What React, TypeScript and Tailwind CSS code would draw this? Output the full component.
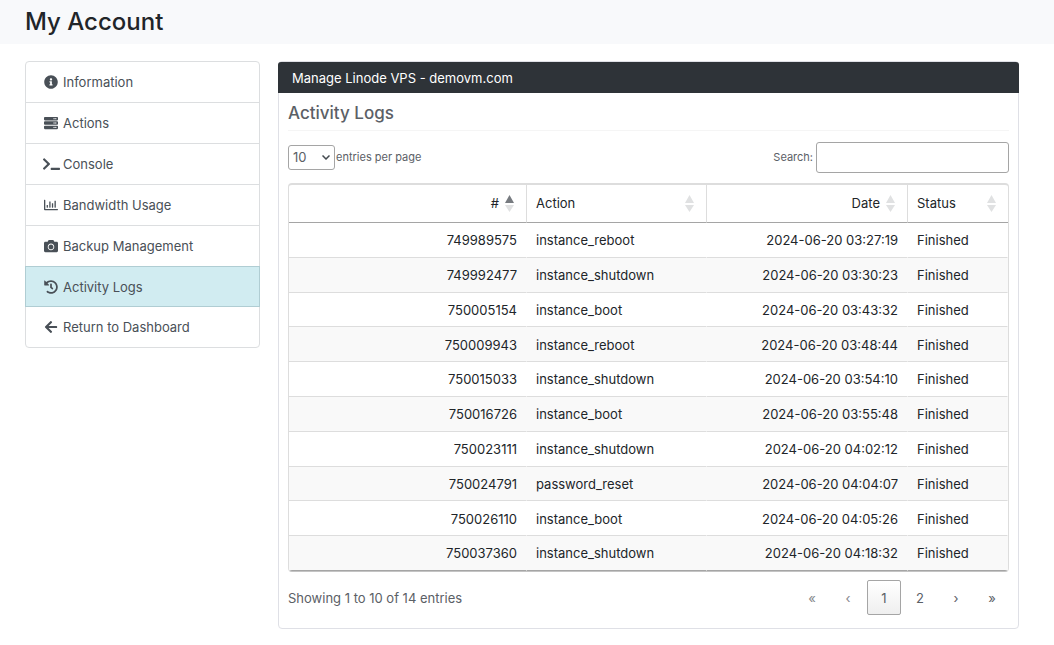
import { useState } from "react";
import type { IconType } from "react-icons";
import {
  FaArrowLeft,
  FaCamera,
  FaHistory,
  FaInfoCircle,
  FaRegChartBar,
  FaServer,
  FaTerminal,
} from "react-icons/fa";
import { clsx } from "clsx";

interface MenuItem {
  label: string;
  icon: IconType;
  wide?: boolean;
}

const MENU: MenuItem[] = [
  { label: "Information", icon: FaInfoCircle },
  { label: "Actions", icon: FaServer },
  { label: "Console", icon: FaTerminal, wide: true },
  { label: "Bandwidth Usage", icon: FaRegChartBar },
  { label: "Backup Management", icon: FaCamera },
  { label: "Activity Logs", icon: FaHistory },
  { label: "Return to Dashboard", icon: FaArrowLeft },
];

const LOGS = [
  { id: 749989575, action: "instance_reboot", date: "2024-06-20 03:27:19", status: "Finished" },
  { id: 749992477, action: "instance_shutdown", date: "2024-06-20 03:30:23", status: "Finished" },
  { id: 750005154, action: "instance_boot", date: "2024-06-20 03:43:32", status: "Finished" },
  { id: 750009943, action: "instance_reboot", date: "2024-06-20 03:48:44", status: "Finished" },
  { id: 750015033, action: "instance_shutdown", date: "2024-06-20 03:54:10", status: "Finished" },
  { id: 750016726, action: "instance_boot", date: "2024-06-20 03:55:48", status: "Finished" },
  { id: 750023111, action: "instance_shutdown", date: "2024-06-20 04:02:12", status: "Finished" },
  { id: 750024791, action: "password_reset", date: "2024-06-20 04:04:07", status: "Finished" },
  { id: 750026110, action: "instance_boot", date: "2024-06-20 04:05:26", status: "Finished" },
  { id: 750037360, action: "instance_shutdown", date: "2024-06-20 04:18:32", status: "Finished" },
];

function SideMenu() {
  return (
    <nav className="w-[235px] shrink-0 rounded border border-[#dcdee0]">
      {MENU.map(({ label, icon: Icon, wide }) => {
        const active = label === "Activity Logs";
        return (
          <a
            key={label}
            href="#"
            aria-current={active ? "page" : undefined}
            className={clsx(
              "flex h-[41px] items-center gap-1 border-b px-[17px] text-[13px] text-[#495057] last:h-10 last:border-b-0",
              active
                ? "-mx-px -mt-px border-x border-t border-[#b0cdd3] bg-[#d1ecf1]"
                : "border-[#dcdee0]"
            )}
          >
            <span className="flex w-4 shrink-0 justify-center">
              <Icon className={clsx("h-3.5 shrink-0", wide ? "w-[17px]" : "w-3.5")} aria-hidden="true" />
            </span>
            <span className="pt-0.5">{label}</span>
          </a>
        );
      })}
    </nav>
  );
}

function SortIcon({ direction }: { direction?: "asc" | "desc" }) {
  return (
    <svg viewBox="0 0 9 17" className="h-[17px] w-[9px] shrink-0" aria-hidden="true">
      <path d="M4.5 0 9 8H0z" fill={direction === "asc" ? "#777b80" : "#e0e1e2"} />
      <path d="M0 10h9l-4.5 7z" fill={direction === "desc" ? "#777b80" : "#e0e1e2"} />
    </svg>
  );
}

interface HeadCellProps {
  label: string;
  className?: string;
  numeric?: boolean;
  direction?: "asc" | "desc";
}

function HeadCell({ label, className, numeric, direction }: HeadCellProps) {
  return (
    <th
      scope="col"
      aria-sort={direction === "asc" ? "ascending" : undefined}
      className={clsx("h-[38px] border-r border-b border-r-[#dddddd] border-b-[#a5a5a5] p-0 font-normal last:border-r-0", className)}
    >
      <button
        type="button"
        className={clsx("flex w-full items-center pr-3 pl-[9px]", numeric ? "justify-end gap-1.5" : "justify-between")}
      >
        {label}
        <SortIcon direction={direction} />
      </button>
    </th>
  );
}

function LogTable() {
  return (
    <div className="mt-2.5 overflow-hidden rounded border border-t-2 border-[#dddddd] border-b-[#c4c4c4]">
      <table className="h-[386px] w-full table-fixed border-separate border-spacing-0 text-[13px] text-[#212529]">
        <thead>
          <tr>
            <HeadCell label="#" numeric direction="asc" />
            <HeadCell label="Action" className="w-[180px]" />
            <HeadCell label="Date" className="w-[201px]" numeric />
            <HeadCell label="Status" className="w-[100px]" />
          </tr>
        </thead>
        <tbody className="[&_td]:border-r [&_td]:border-b [&_td]:border-r-transparent [&_td]:border-b-[#dddddd] [&_td]:px-[9px] [&_td]:pt-0.5 [&_td]:pb-0 [&_td]:whitespace-nowrap [&_tr:last-child_td]:border-b-[#a5a5a5] [&_tr:nth-child(even)]:bg-[#f9f9f9]">
          {LOGS.map((log) => (
            <tr key={log.id}>
              <td className="text-right">{log.id}</td>
              <td>{log.action}</td>
              <td className="text-right">{log.date}</td>
              <td>{log.status}</td>
            </tr>
          ))}
        </tbody>
      </table>
    </div>
  );
}

function PageLength() {
  return (
    <div className="flex items-center">
      <div className="relative">
        <select
          id="page-length"
          defaultValue="10"
          className="block h-[25px] w-[47px] appearance-none rounded-[3px] border border-[#a5a5a5] bg-white pl-1 text-[13px]"
        >
          <option>10</option>
          <option>25</option>
          <option>50</option>
        </select>
        <svg
          viewBox="0 0 8 5"
          className="pointer-events-none absolute top-2.5 right-[5px] h-[5px] w-2"
          fill="none"
          stroke="#444a50"
          strokeWidth="1.5"
          aria-hidden="true"
        >
          <path d="M.5.5 4 4 7.5.5" />
        </svg>
      </div>
      <label htmlFor="page-length" className="pl-px">
        entries per page
      </label>
    </div>
  );
}

function Pagination() {
  const [page, setPage] = useState(1);
  const buttons = [
    { text: "«", label: "First", target: 1 },
    { text: "‹", label: "Previous", target: Math.max(1, page - 1) },
    { text: "1", label: "Page 1", target: 1 },
    { text: "2", label: "Page 2", target: 2 },
    { text: "›", label: "Next", target: Math.min(2, page + 1) },
    { text: "»", label: "Last", target: 2 },
  ];

  return (
    <nav aria-label="Log pages" className="flex gap-0.5">
      {buttons.map(({ text, label, target }) => {
        const current = text === String(page);
        const muted = page === 1 && target === 1 && !current;
        return (
          <button
            key={label}
            type="button"
            aria-label={label}
            aria-current={current ? "page" : undefined}
            onClick={() => setPage(target)}
            className={clsx(
              "h-[35px] w-[34px] rounded-xs border pt-0.5 text-[13px]",
              current ? "border-[#a5a5a5] bg-linear-to-b from-white to-[#efefef]" : "border-transparent",
              muted && "text-[#85888c]"
            )}
          >
            {text}
          </button>
        );
      })}
    </nav>
  );
}

export default function App() {
  return (
    <div className="bg-white font-[Inter,sans-serif] text-[#5b6066]">
      <header className="h-11 bg-[#f8f9fb] px-[25px]">
        <h1 className="pt-1 text-2xl leading-9 font-medium text-[#212529]">My Account</h1>
      </header>

      <div className="flex items-start gap-[18px] pt-[17px] pr-[35px] pb-4 pl-[25px]">
        <SideMenu />

        <main className="min-w-0 flex-1 rounded border border-[#dfe0e6]">
          <div className="-mx-px rounded-t-[3px] bg-[#2e3338] px-3.5 pt-0.5 text-[13px] leading-[29px] text-white">
            Manage Linode VPS - demovm.com
          </div>
          <div className="px-[9px] pb-[13px]">
            <h2 className="border-b border-[#f5f5f5] pt-1.5 pb-[3px] text-[17px] leading-7 font-medium">Activity Logs</h2>

            <div className="mt-[11px] flex items-center justify-between text-[11px]">
              <PageLength />
              <div className="flex items-center gap-[3px]">
                <label htmlFor="log-search">Search:</label>
                <input
                  id="log-search"
                  type="search"
                  className="h-[31px] w-[193px] rounded-[3px] border border-[#a5a5a5] bg-white px-2 text-[13px]"
                />
              </div>
            </div>

            <LogTable />

            <div className="mt-2 flex items-center justify-between text-[13px]">
              <p className="pt-0.5">Showing 1 to 10 of 14 entries</p>
              <Pagination />
            </div>
          </div>
        </main>
      </div>
    </div>
  );
}
